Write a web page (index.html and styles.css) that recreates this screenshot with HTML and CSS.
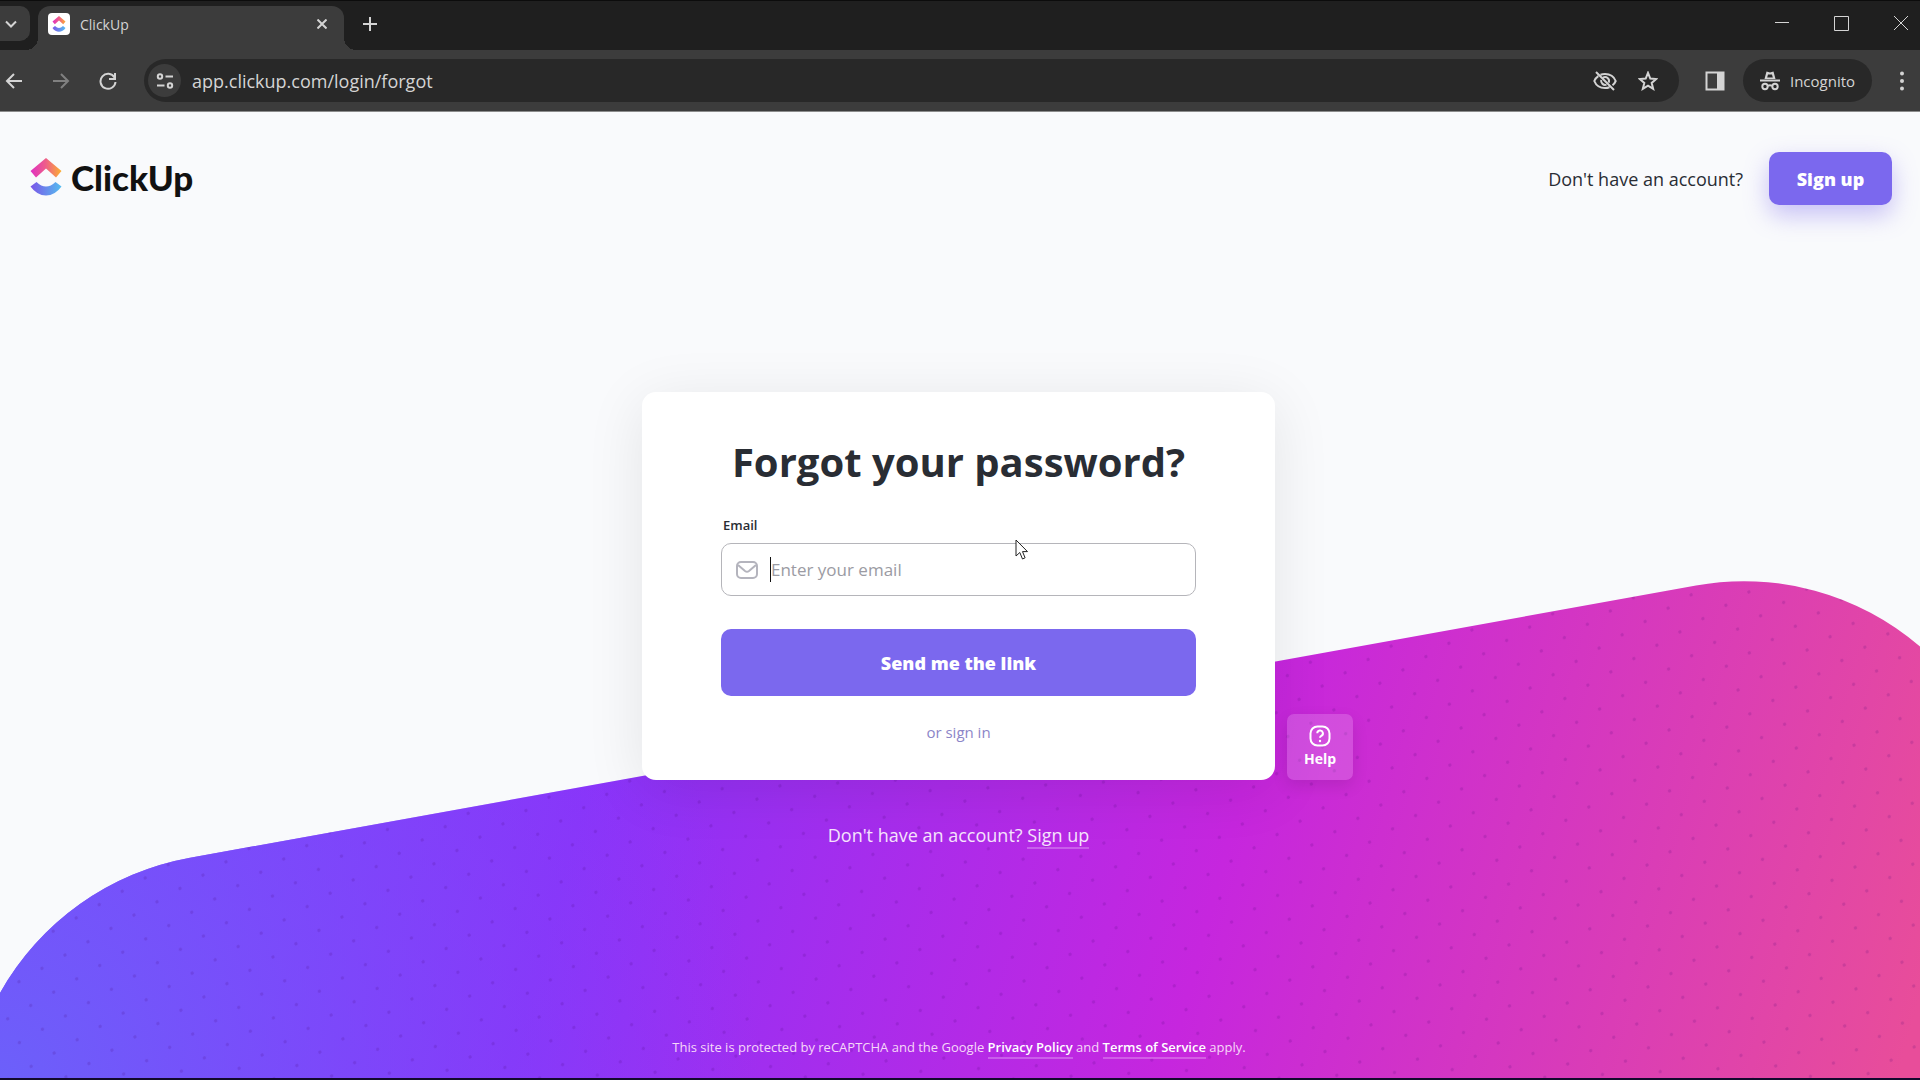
FILE: index.html
```html
<!DOCTYPE html>
<html lang="en">
<head>
<meta charset="utf-8">
<meta name="viewport" content="width=device-width, initial-scale=1">
<title>ClickUp</title>
<link rel="stylesheet" href="styles.css">
</head>
<body>
<svg class="defs" width="0" height="0" aria-hidden="true">
  <defs>
    <linearGradient id="roof" x1="0" y1="0" x2="1" y2="0"><stop offset="0" stop-color="#e02fc4"/><stop offset=".5" stop-color="#ee5f88"/><stop offset="1" stop-color="#fbb030"/></linearGradient>
    <linearGradient id="smile" x1="0" y1="0" x2="1" y2="0"><stop offset="0" stop-color="#7b55e8"/><stop offset="1" stop-color="#55bdf0"/></linearGradient>
    <symbol id="mark" viewBox="0 0 32 38">
      <path d="M.5 13 16 0 31.500 13 26 19.500 16 10.500 6 19.500z" fill="url(#roof)"/>
      <path d="M.5 28.500 6.500 24Q16 33 25.500 24L31.500 28.500Q25 37.500 16 37.500T.5 28.500z" fill="url(#smile)"/>
    </symbol>
  </defs>
</svg>

<div class="browser">
  <div class="tabs">
    <button class="tab-search" aria-label="Search tabs"><svg width="12" height="8" viewBox="0 0 12 8"><path d="M1 1.500l5 5 5-5"/></svg></button>
    <div class="tab">
      <span class="favicon"><svg width="14" height="16"><use href="#mark"/></svg></span>
      <span class="tab-title">ClickUp</span>
      <button class="tab-close" aria-label="Close tab"><svg width="10" height="10" viewBox="0 0 10 10"><path d="M.5.5l9 9M9.500.5l-9 9"/></svg></button>
    </div>
    <button class="tab-new" aria-label="New tab"><svg width="14" height="14" viewBox="0 0 14 14"><path d="M7 0v14M0 7h14"/></svg></button>
    <div class="window-controls">
      <button aria-label="Minimize"><svg width="14" height="14" viewBox="0 0 14 14"><path d="M0 6.500h14"/></svg></button>
      <button aria-label="Maximize"><svg width="15" height="15" viewBox="0 0 15 15"><path d="M.5.5h14v14H.5z"/></svg></button>
      <button aria-label="Close"><svg width="14" height="14" viewBox="0 0 14 14"><path d="M0 0l14 14M14 0L0 14"/></svg></button>
    </div>
  </div>
  <div class="toolbar">
    <div class="nav">
      <button aria-label="Back"><svg width="18" height="18" viewBox="0 0 18 18"><path d="M17 9H2M9 2L2 9l7 7"/></svg></button>
      <button class="dim" aria-label="Forward"><svg width="18" height="18" viewBox="0 0 18 18"><path d="M1 9h15M9 2l7 7-7 7"/></svg></button>
      <button aria-label="Reload"><svg width="18" height="18" viewBox="0 0 18 18"><path d="M15.500 5.500A7.500 7.500 0 1 0 16.500 10M16 1v6h-6"/></svg></button>
    </div>
    <div class="omnibox">
      <button class="site-info" aria-label="Site information"><svg width="18" height="16" viewBox="0 0 18 16"><circle cx="4" cy="3.500" r="2.200"/><path d="M9.500 3.500H17M1 12.500h7.500"/><circle cx="14" cy="12.500" r="2.200"/></svg></button>
      <input class="url" type="text" aria-label="Address" value="app.clickup.com/login/forgot">
      <button aria-label="Tracking protection"><svg width="24" height="20" viewBox="0 0 24 20"><path d="M7.500 3.700C8.900 3.200 10.400 3 12 3c5 0 9 2.700 10.700 7-.7 1.700-1.800 3.200-3.200 4.300M16.500 16.200c-1.400.5-2.900.8-4.500.8-5 0-9-2.700-10.700-7 .8-2 2.200-3.700 4-4.900M3 1l18 18M10 6.600a4 4 0 0 1 5.700 5M8.200 9a4 4 0 0 0 5.300 4.600"/></svg></button>
      <button aria-label="Bookmark"><svg width="20" height="20" viewBox="0 0 20 20"><path d="M10 1.800l2.300 5.700 6 .5-4.600 3.900 1.500 6L10 14.700l-5.200 3.200 1.500-6L1.700 8l6-.5z"/></svg></button>
    </div>
    <button class="panel" aria-label="Side panel"><svg width="20" height="20" viewBox="0 0 20 20"><path d="M1.500 1.500h17v17h-17z"/><path class="solid" d="M12 1h7v18h-7z"/></svg></button>
    <button class="incognito"><svg width="20" height="20" viewBox="0 0 20 20"><path class="solid" d="M6.500.5l3.500 1 3.500-1L15.500 8H4.500zM0 8.500h20v2H0z"/><path class="hollow" d="M8 3.500h4l.8 3H7.200z"/><circle cx="5" cy="15.500" r="2.700"/><circle cx="15" cy="15.500" r="2.700"/><path d="M8 15q2-1.300 4 0"/></svg><span>Incognito</span></button>
    <button class="menu" aria-label="Menu"><svg width="4" height="20" viewBox="0 0 4 20"><g class="solid"><circle cx="2" cy="2.500" r="2"/><circle cx="2" cy="10" r="2"/><circle cx="2" cy="17.500" r="2"/></g></svg></button>
  </div>
</div>

<div class="page">
  <svg class="wave" viewBox="0 0 1920 965" preserveAspectRatio="none" aria-hidden="true">
    <defs>
      <linearGradient id="sweep" gradientUnits="userSpaceOnUse" x1="0" y1="846" x2="1799" y2="1333">
        <stop offset="0" stop-color="#7650fc"/><stop offset=".28" stop-color="#8a33f9"/><stop offset=".62" stop-color="#c626de"/><stop offset="1" stop-color="#e84d9a"/>
      </linearGradient>
      <radialGradient id="corner" gradientUnits="userSpaceOnUse" cx="0" cy="965" r="760">
        <stop offset="0" stop-color="#6c60fa"/><stop offset=".5" stop-color="#7a4cfa" stop-opacity=".6"/><stop offset="1" stop-color="#8440fa" stop-opacity="0"/>
      </radialGradient>
      <pattern id="dots" width="26.500" height="26.500" patternUnits="userSpaceOnUse" patternTransform="matrix(.868 -.502 .443 .897 208.600 743.800)"><circle cx="13.250" cy="13.250" r="1.700" fill="#400070"/></pattern>
      <path id="hill" d="M0 880A274 274 0 0 1 190 745L1696 473A270 270 0 0 1 1920 534V965H0z"/>
    </defs>
    <use href="#hill" fill="url(#sweep)"/>
    <use href="#hill" fill="url(#corner)"/>
    <use href="#hill" fill="url(#dots)" opacity=".16"/>
  </svg>

  <header class="site-header">
    <a class="logo" href="#"><svg width="32" height="38"><use href="#mark"/></svg><span>ClickUp</span></a>
    <div class="account">
      <span>Don't have an account?</span>
      <button class="signup">Sign up</button>
    </div>
  </header>

  <main>
    <form class="card">
      <h1>Forgot your password?</h1>
      <label for="email">Email</label>
      <div class="field">
        <svg width="22" height="18" viewBox="0 0 22 18"><rect x="1" y="1" width="20" height="16" rx="4"/><path d="M2 4l7 6q2 1.500 4 0l7-6"/></svg>
        <span class="caret"></span>
        <input id="email" type="email" placeholder="Enter your email">
      </div>
      <button class="send" type="button">Send me the link</button>
      <a class="signin" href="#">or sign in</a>
      <button class="help" type="button"><svg width="22" height="22" viewBox="0 0 22 22"><rect x="1.500" y="1.500" width="19" height="19" rx="7"/><path d="M8.300 8.300a2.800 2.800 0 1 1 4 2.500q-1.300.7-1.300 2"/><circle class="solid" cx="11" cy="16" r="1.200"/></svg><span>Help</span></button>
      <svg class="pointer" width="14" height="22" viewBox="0 0 14 22" aria-hidden="true"><path d="M1 1v16l3.800-3.500L7.500 20l2.600-1.200L7.500 12.600h5z"/></svg>
    </form>
    <p class="register">Don't have an account? <a href="#">Sign up</a></p>
  </main>

  <footer>This site is protected by reCAPTCHA and the Google <a href="#">Privacy Policy</a> and <a href="#">Terms of Service</a> apply.</footer>
</div>
</body>
</html>
```
FILE: styles.css
```css
* { box-sizing: border-box; }
body {
  margin: 0;
  min-height: 100vh;
  display: flex;
  flex-direction: column;
  font-family: "Open Sans", "Noto Sans", sans-serif;
  color: #292d34;
  background: #f9fafc;
  border-bottom: 2px solid #120a2c;
}
button, input { font: inherit; color: inherit; background: none; border: 0; padding: 0; margin: 0; }
button { display: flex; align-items: center; justify-content: center; }
svg { display: block; flex: none; }
a { color: inherit; text-decoration: none; }
.defs { position: absolute; }

.browser { color: #d4d4d4; background: #3c3c3c; border-bottom: 1px solid #8c8c8c; }
.browser svg { fill: none; stroke: currentColor; stroke-width: 2; }
.browser .solid { fill: currentColor; stroke: none; }
.browser .hollow { fill: #282828; stroke: none; }
.tabs { display: flex; height: 50px; padding-top: 5px; background: #1f1f1f; border-top: 1px solid #0c0c0c; }
.tab-search { width: 30px; height: 35px; padding-right: 8px; background: #3c3c3c; border-radius: 0 10px 10px 0; }
.tab {
  position: relative;
  display: flex;
  align-items: center;
  width: 306px;
  margin-left: 8px;
  padding: 0 17px 8px 10px;
  background: #3c3c3c;
  border-radius: 12px 12px 0 0;
}
/* curved feet where the tab meets the toolbar */
.tab::before, .tab::after { content: ""; position: absolute; bottom: 0; width: 12px; height: 12px; }
.tab::before { right: 100%; background: radial-gradient(circle at 0 0, #1f1f1f 12px, #3c3c3c 12px); }
.tab::after { left: 100%; background: radial-gradient(circle at 100% 0, #1f1f1f 12px, #3c3c3c 12px); }
.favicon { display: flex; align-items: center; justify-content: center; width: 22px; height: 22px; background: #fff; border-radius: 4px; }
.browser .favicon svg { stroke: none; }
.tab-title { flex: 1; padding-left: 10px; font-size: 14px; }
.tab-new { width: 52px; height: 35px; }
.window-controls { display: flex; margin-left: auto; gap: 45px; padding: 0 12px 10px 0; }
.window-controls svg { stroke-width: 1; }
.toolbar { display: flex; align-items: center; height: 61px; padding: 0 16px 0 5px; }
.nav { display: flex; gap: 29px; }
.nav .dim { color: #808080; }
.omnibox {
  display: flex;
  align-items: center;
  flex: 1;
  height: 43px;
  margin-left: 27px;
  padding: 0 21px 0 4px;
  gap: 21px;
  background: #282828;
  border-radius: 22px;
}
.site-info { width: 33px; height: 33px; background: #3c3c3c; border-radius: 50%; }
.url { flex: 1; min-width: 0; margin-left: -10px; font-size: 18px; line-height: 24px; }
.panel { margin: 0 18px 0 26px; }
.incognito { width: 129px; height: 43px; gap: 10px; font-size: 15px; background: #282828; border-radius: 22px; }
.menu { margin-left: 28px; }

.page { position: relative; flex: 1; display: flex; flex-direction: column; }
.wave { position: absolute; inset: 0; width: 100%; height: 100%; }
.site-header, main, footer { position: relative; }
.site-header { display: flex; align-items: center; justify-content: space-between; padding: 40px 28px 0 30px; }
.logo { display: flex; align-items: center; gap: 9px; padding-bottom: 4px; font-family: Lato, sans-serif; font-size: 35px; line-height: 40px; font-weight: 900; color: #111; }
.account { display: flex; align-items: center; gap: 26px; font-size: 18px; line-height: 24px; }
.signup { width: 123px; height: 53px; font-weight: 800; color: #fff; background: #7b68ee; border-radius: 10px; box-shadow: 0 10px 24px rgba(123, 104, 238, .4); }

main { flex: 1; display: flex; flex-direction: column; align-items: center; padding: 187px 3px 40px 0; }
.card {
  position: relative;
  display: flex;
  flex-direction: column;
  width: 633px;
  padding: 42px 79px 36px;
  background: #fff;
  border-radius: 14px;
  box-shadow: 0 10px 60px rgba(0, 0, 0, .09);
}
h1 { margin: 0; font-size: 40px; line-height: 56px; font-weight: 700; text-align: center; white-space: nowrap; }
.card label { margin: 25px 0 8px 2px; font-size: 13px; line-height: 20px; font-weight: 600; }
.field { display: flex; align-items: center; height: 53px; padding: 0 14px; border: 1px solid #b5b5ba; border-radius: 10px; }
.field svg { fill: none; stroke: #b4b4bd; stroke-width: 2; }
.caret { width: 1px; height: 25px; margin-left: 12px; background: #111; }
.field input { flex: 1; min-width: 0; height: 40px; font-size: 17px; outline: 0; }
.field input::placeholder { color: #9b9ba3; opacity: 1; }
.send { height: 67px; margin-top: 33px; font-size: 18px; font-weight: 800; color: #fff; background: #7b68ee; border-radius: 10px; }
.signin { align-self: center; margin-top: 24px; font-size: 15px; line-height: 24px; color: #8c85c8; }
.help {
  position: absolute;
  left: calc(100% + 12px);
  bottom: 0;
  flex-direction: column;
  gap: 2px;
  width: 66px;
  height: 66px;
  font-size: 14px;
  line-height: 20px;
  font-weight: 700;
  color: #fff;
  background: rgba(255, 255, 255, .17);
  border-radius: 7px;
  box-shadow: 0 6px 16px rgba(0, 0, 0, .1);
}
.help svg { fill: none; stroke: #fff; stroke-width: 2; }
.help .solid { fill: #fff; stroke: none; }
.pointer { position: absolute; left: 373px; top: 147px; fill: #fff; stroke: #222; }
.register { margin: 41px 0 0; font-size: 18px; line-height: 28px; color: #f6e4fd; }
.register a, footer a { display: inline-block; border-bottom: 2px solid rgba(255, 255, 255, .25); }
.register a { line-height: 24px; }
footer { padding: 0 2px 19px 0; font-size: 13px; line-height: 20px; text-align: center; color: #f6d8f8; }
footer a { font-weight: 600; color: #fff; }
```
